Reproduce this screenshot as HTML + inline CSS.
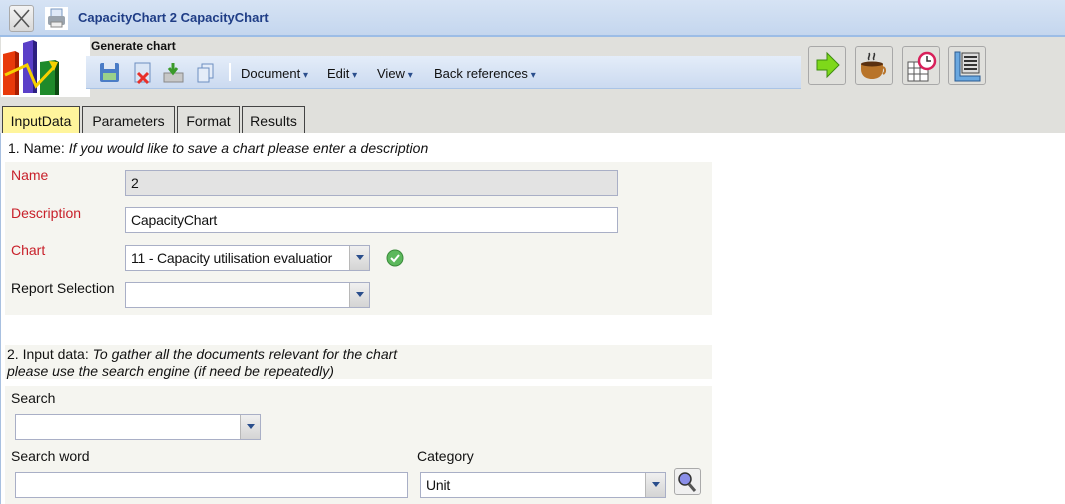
<!DOCTYPE html>
<html><head><meta charset="utf-8"><style>
*{margin:0;padding:0;box-sizing:border-box}
body{width:1065px;height:504px;overflow:hidden;background:#fff;font-family:"Liberation Sans",sans-serif;font-size:14px;color:#111;position:relative}
.a{position:absolute}
.inp{position:absolute;border:1px solid #a9afc6;background:#fff;height:26px;font-size:14px;padding:4px 4px 0 5px;letter-spacing:-0.2px}
.dd{position:absolute;right:0;top:0;width:20px;height:100%;background:linear-gradient(#f0f0f0,#d4d4d4);border-left:1px solid #b8b8b8}
.dd:after{content:"";position:absolute;left:6px;top:9px;border:4px solid transparent;border-top:5px solid #2a4e8c;border-bottom:0}
.red{color:#c8202a}
.tab{position:absolute;top:106px;height:27px;border:1px solid #444;border-bottom:none;background:#e0e0dc;padding:6px 0 0 0;text-align:center;font-size:14px}
.bt{position:absolute;top:46px;width:38px;height:39px;border:1px solid #a8a8a8;border-radius:3px;background:#e0e0dc}
.mi{position:absolute;top:66px;font-size:13px}
.mi:after{content:" ▾";font-size:10px;color:#2a4e8c}
</style></head><body>
<div class="a" style="left:0;top:0;width:1065px;height:36px;background:linear-gradient(#d6e3f4,#c4d6ee)"></div>
<div class="a" style="left:0;top:35px;width:1065px;height:2px;background:#9cbde6"></div>
<div class="a" style="left:9px;top:5px;width:25px;height:27px;border:1px solid #aaa;border-radius:3px;background:linear-gradient(#f4f4f4,#d8d8d8)"><svg width="23" height="25"><path d="M4 4L19 21M19 4L4 21" stroke="#555" stroke-width="1.6"/></svg></div>
<div class="a" style="left:45px;top:7px;width:23px;height:23px;background:#fff"><svg width="23" height="23"><rect x="6" y="2" width="11" height="8" fill="#dfe9f7" stroke="#7a98c0"/><rect x="3" y="9" width="17" height="9" rx="2" fill="#9aa3ad"/><rect x="6" y="15" width="11" height="5" fill="#eee" stroke="#888"/></svg></div>
<div class="a" style="left:78px;top:10px;font-weight:bold;font-size:13px;color:#1f3d86">CapacityChart 2 CapacityChart</div>
<div class="a" style="left:0;top:37px;width:1065px;height:96px;background:#e0e0dc"></div>
<div class="a" style="left:1px;top:37px;width:89px;height:60px;background:#fff"><svg width="89" height="60"><path d="M2 17l12-3v44H2z" fill="#e83a0a"/><path d="M14 14l4 2v42h-4z" fill="#a81d00"/><path d="M22 6l10-3v53H22z" fill="#5a3fc8"/><path d="M32 3l4 2v51h-4z" fill="#2c1f80"/><path d="M39 25l15-2v35H39z" fill="#1e8a2a"/><path d="M54 23l4 2v33h-4z" fill="#0c4a12"/><path d="M4 38l22-10 9 21 18-19" stroke="#f5d000" stroke-width="3" fill="none"/><path d="M48 24l9 1-4 9z" fill="#f5d000"/></svg></div>
<div class="a" style="left:91px;top:39px;font-weight:bold;font-size:12px">Generate chart</div>
<div class="a" style="left:86px;top:56px;width:715px;height:33px;background:linear-gradient(#e4edf9,#cbdaf0);border-bottom:1px solid #aac4e6"></div>
<svg class="a" style="left:98px;top:61px" width="125" height="24"><rect x="2" y="2" width="19" height="19" rx="2" fill="#4a7cc6"/><rect x="6" y="2" width="11" height="6" fill="#dfe8f4"/><rect x="5" y="12" width="13" height="7" fill="#9ad08a"/><rect x="37" y="2" width="15" height="19" fill="#dbe6f5" stroke="#6c8ec0"/><path d="M40 12l10 10M50 12l-10 10" stroke="#e8302a" stroke-width="3"/><rect x="66" y="12" width="19" height="9" fill="#c8c8c8" stroke="#888"/><path d="M75 2v9M71 7l4 5 4-5" stroke="#3a9a2a" stroke-width="3" fill="none"/><rect x="104" y="3" width="11" height="14" fill="#e4ecf8" stroke="#6c8ec0"/><rect x="100" y="7" width="11" height="14" fill="#e4ecf8" stroke="#6c8ec0"/></svg>
<div class="a" style="left:229px;top:63px;width:2px;height:18px;background:#fff"></div>
<div class="mi" style="left:241px">Document</div>
<div class="mi" style="left:327px">Edit</div>
<div class="mi" style="left:377px">View</div>
<div class="mi" style="left:434px">Back references</div>
<div class="bt" style="left:808px"><svg width="36" height="37"><path d="M8 13h10V6l12 12-12 12v-7H8z" fill="#7ed81a" stroke="#3e8c10"/></svg></div>
<div class="bt" style="left:855px"><svg width="36" height="37"><path d="M5 17h22v5c0 7-5 10-11 10s-11-3-11-10z" fill="#b8742a"/><ellipse cx="16" cy="17" rx="11" ry="2.5" fill="#5a3010"/><path d="M27 20a4 4 0 010 7" stroke="#b8742a" stroke-width="2" fill="none"/><path d="M13 13c-2-3 2-4 0-7M18 13c-2-3 2-4 0-7" stroke="#333" stroke-width="1.5" fill="none"/></svg></div>
<div class="bt" style="left:902px"><svg width="36" height="37"><path d="M5 15h20v19H5z" fill="#fff" stroke="#555"/><path d="M5 21h20M5 27h20M11 15v19M17 15v19" stroke="#555"/><circle cx="24" cy="14" r="8" fill="#fff" stroke="#d8205a" stroke-width="2.5"/><path d="M24 9v5h4" stroke="#333" stroke-width="1.5" fill="none"/></svg></div>
<div class="bt" style="left:948px"><svg width="36" height="37"><path d="M6 5h5v24h20v5H6z" fill="#6aa8e0" stroke="#2a5a90"/><rect x="13" y="6" width="17" height="20" fill="#ddd" stroke="#444"/><path d="M15 10h13M15 14h13M15 18h13M15 22h13" stroke="#333" stroke-width="2"/></svg></div>
<div class="tab" style="left:2px;width:78px;background:#fff59c">InputData</div>
<div class="tab" style="left:82px;width:93px">Parameters</div>
<div class="tab" style="left:177px;width:63px">Format</div>
<div class="tab" style="left:242px;width:63px">Results</div>
<div class="a" style="left:0;top:133px;width:1px;height:371px;background:#a8c0e0"></div>
<div class="a" style="left:8px;top:140px">1. Name: <i>If you would like to save a chart please enter a description</i></div>
<div class="a" style="left:5px;top:162px;width:707px;height:153px;background:#f5f5f0"></div>
<div class="a red" style="left:11px;top:167px">Name</div>
<div class="inp" style="left:125px;top:170px;width:493px;background:#e3e3e3">2</div>
<div class="a red" style="left:11px;top:205px">Description</div>
<div class="inp" style="left:125px;top:207px;width:493px">CapacityChart</div>
<div class="a red" style="left:11px;top:242px">Chart</div>
<div class="inp" style="left:125px;top:245px;width:245px;overflow:hidden;white-space:nowrap">11 - Capacity utilisation evaluatior<div class="dd"></div></div>
<svg class="a" style="left:386px;top:249px" width="18" height="18"><circle cx="9" cy="9" r="8" fill="#5cb85c" stroke="#3a8a3a"/><path d="M5 9l3 3 5-6" stroke="#fff" stroke-width="2" fill="none"/></svg>
<div class="a" style="left:11px;top:280px">Report Selection</div>
<div class="inp" style="left:125px;top:282px;width:245px"><div class="dd"></div></div>
<div class="a" style="left:5px;top:345px;width:707px;height:34px;background:#f5f5f0"></div>
<div class="a" style="left:7px;top:346px;line-height:17px">2. Input data: <i>To gather all the documents relevant for the chart<br>please use the search engine (if need be repeatedly)</i></div>
<div class="a" style="left:5px;top:386px;width:707px;height:118px;background:#f5f5f0"></div>
<div class="a" style="left:11px;top:390px">Search</div>
<div class="inp" style="left:15px;top:414px;width:246px"><div class="dd"></div></div>
<div class="a" style="left:11px;top:448px">Search word</div>
<div class="inp" style="left:15px;top:472px;width:393px"></div>
<div class="a" style="left:417px;top:448px">Category</div>
<div class="inp" style="left:420px;top:472px;width:246px">Unit<div class="dd"></div></div>
<div class="a" style="left:674px;top:468px;width:27px;height:27px;border:1px solid #aaa;border-radius:3px;background:#f0f0f0"><svg width="25" height="25"><circle cx="10" cy="10" r="6" fill="#8a8ee8" stroke="#333" stroke-width="1.5"/><path d="M14 15l6 7" stroke="#555" stroke-width="3"/></svg></div>
</body></html>
